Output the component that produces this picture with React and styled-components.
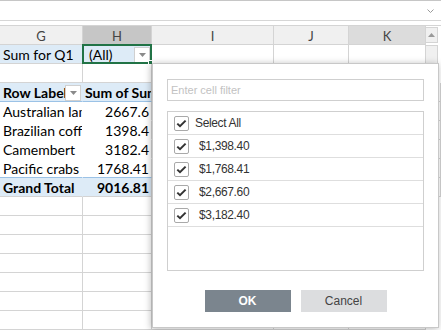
import React from 'react';
import styled, { createGlobalStyle } from 'styled-components';

const Global = createGlobalStyle`
  html, body { margin: 0; padding: 0; background: #fff; }
  body { width: 441px; height: 330px; overflow: hidden; font-family: Lato, "Liberation Sans", sans-serif; }
  * { box-sizing: border-box; }
`;

const Page = styled.div`
  position: relative;
  width: 441px;
  height: 330px;
  overflow: hidden;
`;

const FormulaBar = styled.div`
  height: 21px;
  border-top: 1px solid #c6c6c6;
  border-bottom: 1px solid #d6d6d6;
  display: flex;
  align-items: center;
  justify-content: flex-end;
  padding-right: 7px;
  margin-bottom: 4px;
`;

const Sheet = styled.div`
  border-top: 1px solid #d4d4d4;
`;

const Row = styled.div`
  display: grid;
  grid-template-columns: 83px 69px 122px 75px 77px 15px;
  height: ${p => p.$h || 19}px;
`;

const HeadCell = styled.div`
  background: ${p => p.$bg || '#f0f0f0'};
  border-right: 1px solid #d4d4d4;
  border-bottom: 1px solid #d4d4d4;
  color: #444;
  font-size: 13px;
  display: flex;
  align-items: center;
  justify-content: center;
  padding-top: 1px;
`;

const Cell = styled.div`
  position: relative;
  background: ${p => p.$bg || '#fff'};
  border-right: 1px solid ${p => p.$vline || '#d4d4d4'};
  border-bottom: 1px solid ${p => p.$hline || '#d4d4d4'};
  font-size: 14px;
  font-weight: ${p => (p.$bold ? 700 : 400)};
  color: #000;
  display: flex;
  align-items: center;
  justify-content: ${p => (p.$right ? 'flex-end' : 'flex-start')};
  padding: 1px ${p => (p.$right ? 2 : 1)}px 0 ${p => p.$pl ?? 3}px;
  white-space: nowrap;
  overflow: ${p => (p.$visible ? 'visible' : 'hidden')};
`;

const CellText = styled.span`
  flex: ${p => (p.$grow ? 1 : '0 0 auto')};
  overflow: hidden;
`;

const DropBtn = styled.div`
  flex: 0 0 auto;
  width: 16px;
  height: 16px;
  background: #fff;
  border: 1px solid #d0d0d0;
  display: flex;
  align-items: center;
  justify-content: center;
`;

const Selection = styled.div`
  position: absolute;
  left: -1px;
  top: -1px;
  right: -1px;
  bottom: -1px;
  border: 2px solid #217346;
  pointer-events: none;
`;

const Handle = styled.div`
  position: absolute;
  right: -4px;
  bottom: -4px;
  width: 6px;
  height: 6px;
  background: #217346;
  border: 1px solid #fff;
`;

const ScrollCol = styled.div`
  background: #fff;
  padding: ${p => p.$pad || '0'};
`;

const ScrollBtn = styled.div`
  width: 13px;
  height: 16px;
  margin-left: -1px;
  margin-top: 1px;
  border: 1px solid #d4d4d4;
  background: #f0f0f0;
  display: flex;
  align-items: center;
  justify-content: center;
`;

const Thumb = styled.div`
  width: 13px;
  height: 100%;
  margin-left: -1px;
  border: 1px solid #d4d4d4;
  background: #f0f0f0;
`;

const Popup = styled.div`
  position: absolute;
  left: 152px;
  top: 63px;
  width: 287px;
  height: 265px;
  background: #fff;
  border: 1px solid #c8c8c8;
  box-shadow: -1px 1px 7px rgba(0, 0, 0, 0.28);
  padding: 15px 14px 15px 14px;
  display: flex;
  flex-direction: column;
  font-family: "Liberation Sans", Arial, sans-serif;
`;

const FilterInput = styled.input`
  height: 22px;
  width: 100%;
  border: 1px solid #cfcfcf;
  padding: 0 3px;
  font-family: "Liberation Sans", Arial, sans-serif;
  font-size: 11px;
  outline: none;
  &::placeholder { color: #c2c2c2; }
`;

const List = styled.div`
  margin-top: 10px;
  height: 160px;
  border: 1px solid #cfcfcf;
`;

const Item = styled.div`
  height: 23px;
  border-bottom: 1px solid #dedede;
  display: flex;
  align-items: center;
  padding-left: 6px;
  font-size: 12px;
  letter-spacing: -0.35px;
  color: #333;
`;

const Box = styled.div`
  width: 15px;
  height: 15px;
  border: 1px solid #a9a9a9;
  border-radius: 2px;
  background: #fff;
  display: flex;
  align-items: center;
  justify-content: center;
  margin-right: ${p => p.$gap}px;
`;

const Buttons = styled.div`
  margin-top: 19px;
  display: flex;
  justify-content: center;
  gap: 10px;
`;

const Btn = styled.button`
  width: 86px;
  height: 22px;
  border: none;
  background: ${p => (p.$primary ? '#7b858e' : '#dcdddf')};
  color: ${p => (p.$primary ? '#fff' : '#444')};
  font-family: "Liberation Sans", Arial, sans-serif;
  font-size: 12px;
  font-weight: ${p => (p.$primary ? 700 : 400)};
  padding: 0;
`;

const Tri = ({ up, color = '#8a8a8a' }) => (
  <svg width="7" height="4" viewBox="0 0 7 4">
    <polygon points={up ? '0,4 7,4 3.5,0' : '0,0 7,0 3.5,4'} fill={color} />
  </svg>
);

const Check = () => (
  <svg width="11" height="9" viewBox="0 0 11 9">
    <polyline points="1.3,4.6 4,7.2 9.6,1.6" fill="none" stroke="#333" strokeWidth="2" />
  </svg>
);

const PIVOT = '#ddebf7';
const PBORDER = '#9bc2e6';

const data = [
  ['Australian lamb', '2667.6'],
  ['Brazilian coffee', '1398.4'],
  ['Camembert', '3182.4'],
  ['Pacific crabs', '1768.41'],
];

const values = ['$1,398.40', '$1,768.41', '$2,667.60', '$3,182.40'];

const Empty = () => (
  <>
    <Cell />
    <Cell />
    <Cell />
    <Cell />
    <ScrollCol />
  </>
);

export default function App() {
  return (
    <Page>
      <Global />
      <FormulaBar>
        <svg width="7" height="4" viewBox="0 0 7 4">
          <polyline points="0.5,0.5 3.5,3.5 6.5,0.5" fill="none" stroke="#9a9a9a" strokeWidth="1" />
        </svg>
      </FormulaBar>
      <Sheet>
        <Row>
          <HeadCell>G</HeadCell>
          <HeadCell $bg="#c6c6c6">H</HeadCell>
          <HeadCell>I</HeadCell>
          <HeadCell>J</HeadCell>
          <HeadCell $bg="#dcdcdc">K</HeadCell>
          <ScrollCol>
            <ScrollBtn><Tri up color="#9a9a9a" /></ScrollBtn>
          </ScrollCol>
        </Row>
        <Row>
          <Cell $bg={PIVOT}>Sum for Q1</Cell>
          <Cell $bg={PIVOT} $pl={6} $visible>
            <CellText $grow>(All)</CellText>
            <DropBtn><Tri /></DropBtn>
            <Selection><Handle /></Selection>
          </Cell>
          <Cell />
          <Cell />
          <Cell />
          <ScrollCol $pad="0 0 0 0"><Thumb /></ScrollCol>
        </Row>
        <Row>
          <Cell />
          <Empty />
        </Row>
        <Row>
          <Cell $bg={PIVOT} $bold $vline={PIVOT} $hline={PBORDER} style={{ paddingRight: 1 }}>
            <CellText $grow>Row Labels</CellText>
            <DropBtn><Tri /></DropBtn>
          </Cell>
          <Cell $bg={PIVOT} $bold $hline={PBORDER} $pl={2}>Sum of Sum for Q1</Cell>
          <Empty />
        </Row>
        {data.map(([label, val], i) => (
          <Row key={label}>
            <Cell $vline="#fff" $hline={i === data.length - 1 ? PBORDER : '#fff'}>{label}</Cell>
            <Cell $right $hline={i === data.length - 1 ? PBORDER : '#fff'}>{val}</Cell>
            <Empty />
          </Row>
        ))}
        <Row>
          <Cell $bg={PIVOT} $bold $vline={PIVOT}>Grand Total</Cell>
          <Cell $bg={PIVOT} $bold $right>9016.81</Cell>
          <Empty />
        </Row>
        {Array.from({ length: 8 }).map((_, i) => (
          <Row key={i}>
            <Cell />
            <Empty />
          </Row>
        ))}
      </Sheet>

      <Popup>
        <FilterInput placeholder="Enter cell filter" />
        <List>
          <Item>
            <Box $gap={6}><Check /></Box>
            Select All
          </Item>
          {values.map(v => (
            <Item key={v}>
              <Box $gap={10}><Check /></Box>
              {v}
            </Item>
          ))}
        </List>
        <Buttons>
          <Btn $primary>OK</Btn>
          <Btn>Cancel</Btn>
        </Buttons>
      </Popup>
    </Page>
  );
}
